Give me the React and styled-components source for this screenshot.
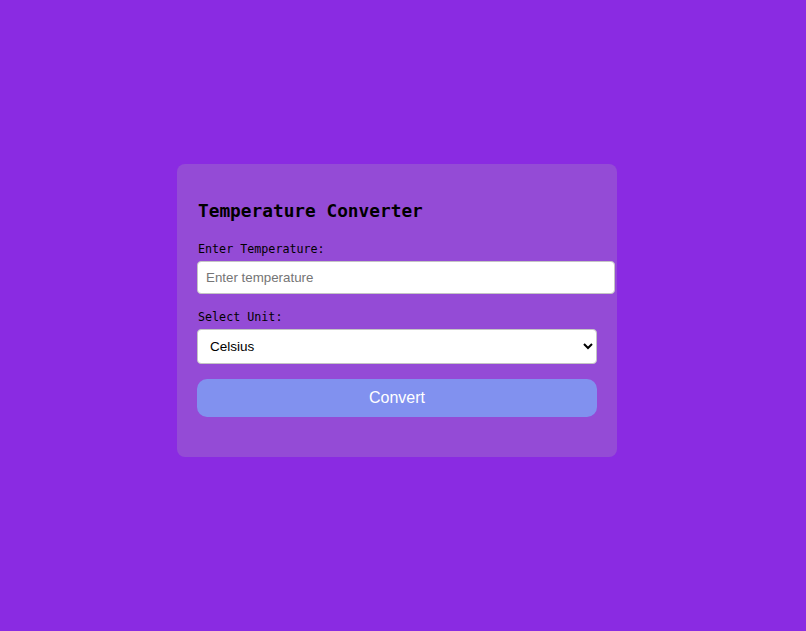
import { createGlobalStyle, styled } from "styled-components"

const GlobalStyle = createGlobalStyle`
  html, body {
    margin: 0;
    padding: 0;
    background: #8a2be2;
  }
  body {
    font-family: "Liberation Sans", Arial, sans-serif;
  }
`

const Page = styled.div`
  min-height: 631px;
  box-sizing: border-box;
  padding: 164px 0 0 177px;
`

const Card = styled.div`
  width: 440px;
  box-sizing: border-box;
  padding: 20px 20px 40px;
  background: #944bd6;
  border-radius: 8px;
`

const Title = styled.h2`
  font-family: "DejaVu Sans Mono", "Liberation Mono", monospace;
  font-size: 17.8px;
  font-weight: bold;
  color: #000;
  margin: 16px 0 19px 1px;
  line-height: 22px;
`

const Label = styled.label`
  display: block;
  font-family: "DejaVu Sans Mono", "Liberation Mono", monospace;
  font-size: 11.7px;
  line-height: 16px;
  color: #000;
  margin: 0 0 4px 1px;
`

const Field = styled.div`
  margin-bottom: ${(props) => props.$gap}px;
`

const Input = styled.input`
  display: block;
  width: 418px;
  height: 33px;
  box-sizing: border-box;
  padding: 0 8px;
  border: 1px solid #c4c4c4;
  border-radius: 4px;
  background: #fff;
  font-family: "Liberation Sans", Arial, sans-serif;
  font-size: 13.33px;
  color: #000;
  outline: none;

  &::placeholder {
    color: #757575;
  }
`

const Select = styled.select`
  display: block;
  width: 400px;
  height: 35px;
  box-sizing: border-box;
  padding: 0 8px;
  border: 1px solid #c4c4c4;
  border-radius: 4px;
  background: #fff;
  font-family: "Liberation Sans", Arial, sans-serif;
  font-size: 13.5px;
  color: #000;
  outline: none;
`

const Button = styled.button`
  display: block;
  width: 400px;
  height: 38px;
  border: none;
  border-radius: 10px;
  background: #8191ef;
  color: #fff;
  font-family: "Liberation Sans", Arial, sans-serif;
  font-size: 16px;
  cursor: pointer;
`

export default function App() {
  return (
    <>
      <GlobalStyle />
      <Page>
        <Card>
          <Title>Temperature Converter</Title>
          <Field $gap={15}>
            <Label htmlFor="temp">Enter Temperature:</Label>
            <Input id="temp" type="number" placeholder="Enter temperature" />
          </Field>
          <Field $gap={15}>
            <Label htmlFor="unit">Select Unit:</Label>
            <Select id="unit" defaultValue="celsius">
              <option value="celsius">Celsius</option>
              <option value="fahrenheit">Fahrenheit</option>
              <option value="kelvin">Kelvin</option>
            </Select>
          </Field>
          <Button>Convert</Button>
        </Card>
      </Page>
    </>
  )
}
